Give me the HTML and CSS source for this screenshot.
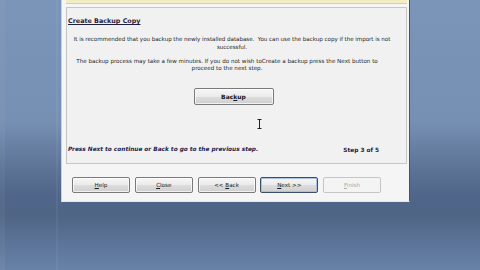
FILE: index.html
```html
<!DOCTYPE html>
<html>
<head>
<meta charset="utf-8">
<link rel="stylesheet" href="styles.css">
</head>
<body>
<div class="dialog">
  <div class="banner"></div>
  <div class="panel">
    <div class="title">Create Backup Copy</div>
    <p class="para p1">It is recommended that you backup the newly installed database.&nbsp; You can use the backup copy if the import is not successful.</p>
    <p class="para p2">The backup process may take a few minutes. If you do not wish toCreate a backup press the Next button to proceed to the next step.</p>
    <div class="backup-row"><button class="btn backup">Bac<u>k</u>up</button></div>
    <div class="footer-row">
      <span class="hint">Press Next to continue or Back to go to the previous step.</span>
      <span class="step">Step 3 of 5</span>
    </div>
    <svg class="ibeam" width="5" height="10" viewBox="0 0 5 10"><path d="M0.5 0.5h4M2.5 0.5v9M0.5 9.5h4" stroke="#222" stroke-width="1" fill="none"/></svg>
  </div>
  <div class="buttons">
    <button class="btn nav"><u>H</u>elp</button>
    <button class="btn nav"><u>C</u>lose</button>
    <button class="btn nav">&lt;&lt; <u>B</u>ack</button>
    <button class="btn nav default"><u>N</u>ext &gt;&gt;</button>
    <button class="btn nav disabled"><u>F</u>inish</button>
  </div>
</div>
</body>
</html>
```
FILE: styles.css
```css
html, body {
  margin: 0;
  padding: 0;
  width: 480px;
  height: 270px;
  overflow: hidden;
}
body {
  font-family: "DejaVu Sans", "Liberation Sans", sans-serif;
  background:
    linear-gradient(to right, rgba(255,255,255,0.04) 0, rgba(255,255,255,0.04) 5px, transparent 5px, transparent 56px, rgba(255,255,255,0.05) 56px, rgba(255,255,255,0.05) 58px, transparent 58px),
    linear-gradient(to bottom, #7b95b8 0%, #7690b3 45%, #627a9c 58%, #50668a 72%, #4f6585 80%, #5c7498 90%, #6882a8 100%);
}
.dialog {
  margin-left: 61px;
  width: 343px;
  height: 201px;
  background: #f5f5f5;
  border-left: 1px solid #c9d1dc;
  border-right: 1px solid #44536a;
  border-bottom: 1px solid #e3e8ee;
  padding: 0 0 0 4px;
  box-sizing: content-box;
  display: flex;
  flex-direction: column;
  position: relative;
}
.banner {
  height: 3px;
  margin-right: 2px;
  background: #f3edc4;
  border-bottom: 1px solid #d9d09c;
}
.panel {
  margin-top: 3px;
  margin-right: 2px;
  height: 157px;
  border: 1px solid #c6c6c6;
  background: #f1f1f1;
  padding: 9px 0 0 1px;
  box-sizing: border-box;
  position: relative;
  display: flex;
  flex-direction: column;
  color: #262626;
}
.title {
  font-size: 6.4px;
  font-weight: bold;
  text-decoration: underline;
  line-height: 8px;
  color: #1e1e3a;
}
.para {
  margin: 0;
  font-size: 5.6px;
  line-height: 7.8px;
  text-align: center;
}
.p1 { margin-top: 11px; padding-right: 10px; letter-spacing: -0.05px; }
.p2 { margin-top: 6px; padding-left: 6px; padding-right: 26px; }
.backup-row {
  margin-top: 15px;
  display: flex;
  justify-content: center;
  padding-right: 7px;
}
.btn {
  font-family: "DejaVu Sans", "Liberation Sans", sans-serif;
  font-size: 5.6px;
  color: #1a1a1a;
  border: 1px solid #7a7a7a;
  border-radius: 2px;
  background: linear-gradient(to bottom, #f6f6f6 0%, #ebebeb 50%, #dddddd 51%, #cfcfcf 100%);
  padding: 0;
  margin: 0;
  box-shadow: inset 0 0 0 1px rgba(255,255,255,0.7);
}
.backup {
  width: 80px;
  height: 17px;
  font-weight: bold;
  font-size: 6px;
}
.footer-row {
  margin-top: 40px;
  display: flex;
  justify-content: space-between;
  align-items: center;
  padding-right: 27px;
  line-height: 8px;
}
.hint {
  font-size: 5.8px;
  font-weight: bold;
  font-style: italic;
  color: #1c1c4e;
}
.step {
  font-size: 5.8px;
  font-weight: bold;
  color: #1c1c3a;
  position: relative;
  top: 1px;
}
.ibeam {
  position: absolute;
  left: 190px;
  top: 111px;
}
.buttons {
  margin-top: 13px;
  display: flex;
  gap: 4.75px;
  padding-left: 6px;
}
.nav {
  width: 58px;
  height: 16px;
}
.default {
  border-color: #3d4f66;
  box-shadow: inset 0 0 0 1px #a9c3de;
}
.disabled {
  border-color: #c6c6c6;
  color: #a8a8a8;
  background: #f4f4f4;
  box-shadow: none;
}
```
